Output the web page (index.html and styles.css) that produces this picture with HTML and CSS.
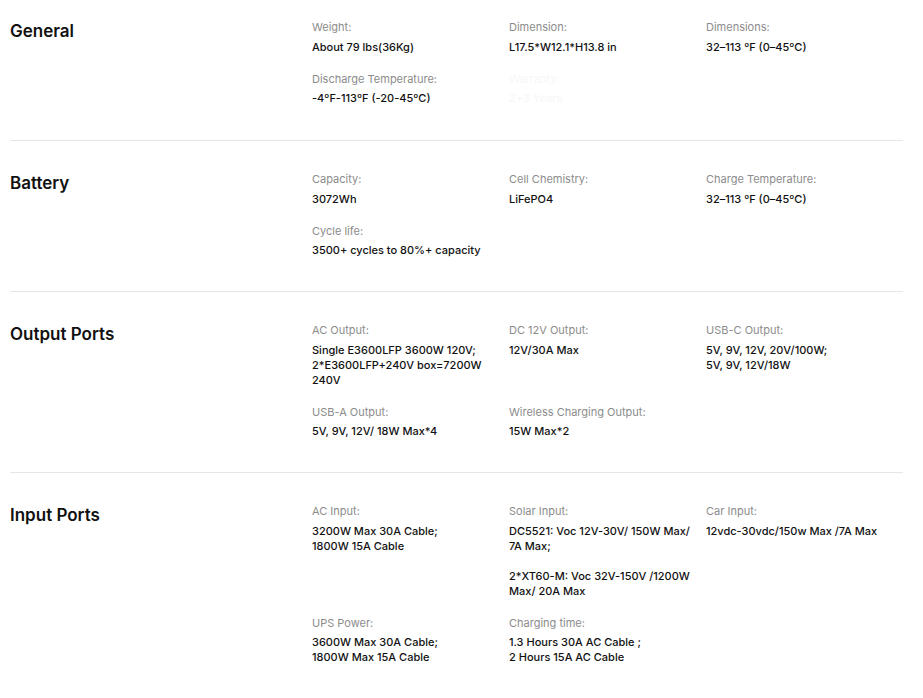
FILE: index.html
```html
<!DOCTYPE html>
<html lang="en">
<head>
<meta charset="utf-8">
<title>Specs</title>
<link rel="stylesheet" href="styles.css">
</head>
<body>
<div class="specs">
  <section class="group">
    <h2 class="title">General</h2>
    <div class="items">
      <div class="item"><div class="label">Weight:</div><div class="value">About 79 lbs(36Kg)</div></div>
      <div class="item"><div class="label">Dimension:</div><div class="value">L17.5*W12.1*H13.8 in</div></div>
      <div class="item"><div class="label">Dimensions:</div><div class="value">32–113 ºF (0–45ºC)</div></div>
      <div class="item"><div class="label">Discharge Temperature:</div><div class="value">-4ºF-113ºF (-20-45ºC)</div></div>
      <div class="item ghost"><div class="label">Warranty:</div><div class="value">2+3 Years</div></div>
    </div>
  </section>
  <section class="group">
    <h2 class="title">Battery</h2>
    <div class="items">
      <div class="item"><div class="label">Capacity:</div><div class="value">3072Wh</div></div>
      <div class="item"><div class="label">Cell Chemistry:</div><div class="value">LiFePO4</div></div>
      <div class="item"><div class="label">Charge Temperature:</div><div class="value">32–113 ºF (0–45ºC)</div></div>
      <div class="item"><div class="label">Cycle life:</div><div class="value">3500+ cycles to 80%+ capacity</div></div>
    </div>
  </section>
  <section class="group">
    <h2 class="title">Output Ports</h2>
    <div class="items">
      <div class="item"><div class="label">AC Output:</div><div class="value">Single E3600LFP 3600W 120V;<br>2*E3600LFP+240V box=7200W<br>240V</div></div>
      <div class="item"><div class="label">DC 12V Output:</div><div class="value">12V/30A Max</div></div>
      <div class="item"><div class="label">USB-C Output:</div><div class="value">5V, 9V, 12V, 20V/100W;<br>5V, 9V, 12V/18W</div></div>
      <div class="item"><div class="label">USB-A Output:</div><div class="value">5V, 9V, 12V/ 18W Max*4</div></div>
      <div class="item"><div class="label">Wireless Charging Output:</div><div class="value">15W Max*2</div></div>
    </div>
  </section>
  <section class="group">
    <h2 class="title">Input Ports</h2>
    <div class="items">
      <div class="item"><div class="label">AC Input:</div><div class="value">3200W Max 30A Cable;<br>1800W 15A Cable</div></div>
      <div class="item"><div class="label">Solar Input:</div><div class="value">DC5521: Voc 12V-30V/ 150W Max/<br>7A Max;<br><br>2*XT60-M: Voc 32V-150V /1200W<br>Max/ 20A Max</div></div>
      <div class="item"><div class="label">Car Input:</div><div class="value">12vdc-30vdc/150w Max /7A Max</div></div>
      <div class="item"><div class="label">UPS Power:</div><div class="value">3600W Max 30A Cable;<br>1800W Max 15A Cable</div></div>
      <div class="item"><div class="label">Charging time:</div><div class="value">1.3 Hours 30A AC Cable ;<br>2 Hours 15A AC Cable</div></div>
    </div>
  </section>
</div>
</body>
</html>
```
FILE: styles.css
```css
html, body {
  margin: 0;
  padding: 0;
  background: #fff;
}
body {
  font-family: Inter, "Open Sans", sans-serif;
  color: #111;
}
.specs {
  margin: 0 20px 0 10px;
}
.group {
  display: grid;
  grid-template-columns: 302px 591px;
  padding: 30px 0 33px;
  border-bottom: 1px solid #e6e6e6;
}
.group:first-child {
  padding-top: 19px;
  padding-bottom: 34px;
}
.group:last-child {
  border-bottom: none;
}
.title {
  margin: 0;
  font-size: 17px;
  line-height: 24px;
  font-weight: 600;
  color: #111;
}
.items {
  display: grid;
  grid-template-columns: repeat(3, 197px);
  row-gap: 16px;
}
.label {
  font-size: 11px;
  line-height: 16px;
  color: #8c8c8c;
  font-weight: 400;
}
.value {
  margin-top: 4.5px;
  font-size: 11px;
  line-height: 15px;
  font-weight: 500;
  color: #111;
  padding-right: 8px;
}
.ghost .label,
.ghost .value {
  color: #f7f7f7;
}
```
